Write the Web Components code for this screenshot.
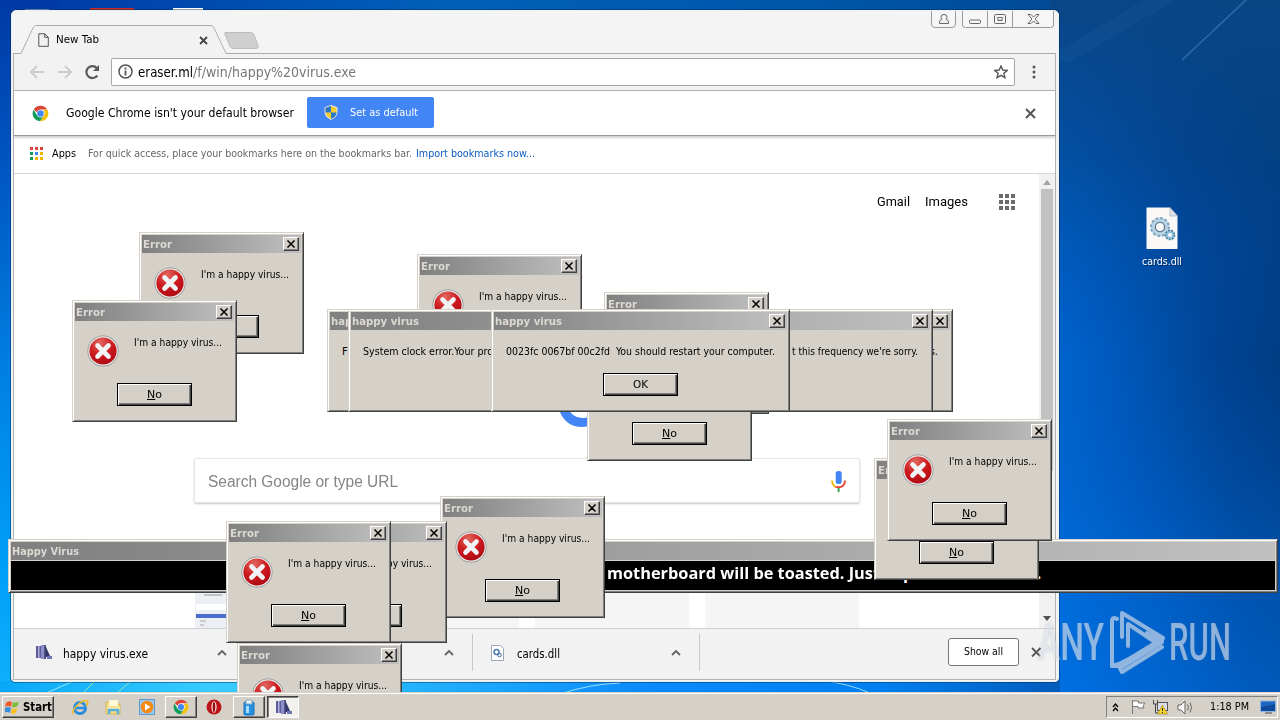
<!DOCTYPE html>
<html lang="en">
<head>
<meta charset="utf-8">
<title>Desktop</title>
<style>
html,body{margin:0;padding:0;width:1280px;height:720px;overflow:hidden}
</style>
</head>
<body>
<desk-top></desk-top>

<script>
const define = (name, html, setup) => customElements.define(name, class extends HTMLElement {
  connectedCallback() {
    if (this.shadowRoot) return;
    this.attachShadow({mode: 'open'}).innerHTML = html;
    if (setup) setup(this);
  }
});

const CHROME = `<circle cx="12" cy="12" r="11" fill="#fff"/><path d="M12 1a11 11 0 0 1 9.6 5.5H12a5.5 5.5 0 0 0-5.2 3.6L2.6 6.3A11 11 0 0 1 12 1z" fill="#db4437"/><path d="M21.6 6.5A11 11 0 0 1 11.5 23l4.8-7.8A5.5 5.5 0 0 0 15.6 7.500z" fill="#f4c20d"/><path d="M2.3 6.600A11 11 0 0 0 11.300 23l4.400-6.900a5.500 5.500 0 0 1-8.600-1.600z" fill="#0f9d58"/><circle cx="12" cy="12" r="4.600" fill="#4285f4"/>`;
const HV = `<rect x="1" y="2" width="5" height="12" fill="#5a5c9c"/><rect x="6" y="1" width="4" height="14" fill="#8c8ec8"/><rect x="3" y="2" width="1.500" height="12" fill="#b0b0d8"/><path d="M10.500 2l5 11h-5z" fill="#34366e"/><rect x="12" y="12" width="5" height="3" fill="#6f74b4"/><rect x="9.500" y="1" width="1.300" height="14" fill="#26285c"/>`;

/* Desktop: wallpaper, icon, windows and the taskbar */
define('desk-top', `
<style>
:host{display:block;position:relative;width:1280px;height:720px;overflow:hidden;font-family:"DejaVu Sans Condensed","DejaVu Sans",sans-serif;font-size:11px;color:#000}
wall-paper,.on{position:absolute}
wall-paper{inset:0}
task-bar{position:absolute;left:0;right:0;bottom:0}
</style>
<wall-paper></wall-paper>
<file-icon class="on" style="left:1121px;top:207px"></file-icon>
<chrome-window class="on" style="left:11px;top:10px"></chrome-window>
<banner-window class="on" style="left:8px;top:539px"></banner-window>
<error-box class="on" style="left:139px;top:232px"></error-box>
<error-box class="on" style="left:72px;top:300px"></error-box>
<error-box class="on" style="left:417px;top:254px"></error-box>
<error-box class="on" style="left:604px;top:292px"></error-box>
<error-box class="on" style="left:587px;top:339px"></error-box>
<message-box class="on" style="left:327px;top:309px;width:626px"><fit-text>F</fit-text><fit-text>s.</fit-text></message-box>
<message-box class="on" style="left:348px;top:309px;width:585px"><fit-text w="130">System clock error.Your pro</fit-text><fit-text w="126">t this frequency we're sorry.</fit-text></message-box>
<message-box class="on" style="left:491px;top:309px;width:299px"><fit-text w="269">0023fc 0067bf 00c2fd&nbsp; You should restart your computer.</fit-text></message-box>
<error-box class="on" style="left:874px;top:458px"></error-box>
<error-box class="on" style="left:887px;top:419px"></error-box>
<error-box class="on" style="left:440px;top:496px"></error-box>
<error-box class="on" style="left:282px;top:521px"></error-box>
<error-box class="on" style="left:237px;top:643px"></error-box>
<error-box class="on" style="left:226px;top:521px"></error-box>
<water-mark class="on" style="left:1030px;top:604px"></water-mark>
<task-bar></task-bar>`);

define('wall-paper', `
<style>
:host{display:block;overflow:hidden}svg{display:block}
</style>
<svg width="1280" height="720">
<defs>
<linearGradient id="l" x2="0" y2="1"><stop offset="0" stop-color="#003aa4"/><stop offset=".25" stop-color="#0058c4"/><stop offset=".55" stop-color="#0084e6"/><stop offset=".8" stop-color="#00a0fa"/><stop offset="1" stop-color="#16b4fc"/></linearGradient>
<linearGradient id="t"><stop offset="0" stop-color="#0038a6"/><stop offset=".35" stop-color="#0060b8"/><stop offset=".6" stop-color="#0058ac"/><stop offset=".83" stop-color="#004a96"/><stop offset="1" stop-color="#0b4684"/></linearGradient>
<linearGradient id="r" x1="0" y1=".75" x2="1" y2=".35"><stop offset="0" stop-color="#006ad8"/><stop offset=".35" stop-color="#0058ba"/><stop offset=".7" stop-color="#004494"/><stop offset="1" stop-color="#003c80"/></linearGradient>
<linearGradient id="rb" x2="0" y2="1"><stop offset="0" stop-color="#0a4686"/><stop offset=".22" stop-color="#054488" stop-opacity=".55"/><stop offset=".5" stop-color="#0050b0" stop-opacity="0"/><stop offset=".8" stop-color="#0070e4" stop-opacity=".35"/><stop offset="1" stop-color="#0074ea" stop-opacity=".5"/></linearGradient>
<linearGradient id="b"><stop offset="0" stop-color="#08a8f8"/><stop offset=".2" stop-color="#38ccff"/><stop offset=".36" stop-color="#26b8fc"/><stop offset=".6" stop-color="#0c8cfa"/><stop offset=".83" stop-color="#0080f0"/><stop offset="1" stop-color="#005cbc"/></linearGradient>
</defs>
<rect width="1280" height="720" fill="url(#t)"/><rect y="0" width="60" height="720" fill="url(#l)"/>
<rect x="1050" width="230" height="720" fill="url(#r)"/><rect x="1050" width="230" height="720" fill="url(#rb)"/>
<path d="M1040 62L1144 0h32L1070 62z" fill="#4a90d0" opacity=".08"/><path d="M1182 60L1246 0" stroke="#5a9ad6" stroke-width="1.500" opacity=".45"/>
<rect y="681" width="1060" height="12" fill="url(#b)"/>
<g stroke="#c8f4ff" fill="none" opacity=".75"><path d="M44 694l32-14M560 694q30-10 60-11"/><path d="M82 694l14-14M116 694l16-14" stroke="#b8f0a8"/><path d="M820 680q30 4 50 13"/></g>
<rect x="25" y="9" width="24" height="3" fill="#9ac0e8"/><rect x="90" y="8" width="44" height="3" fill="#cc2c24"/><rect x="173" y="8" width="30" height="3" fill="#fff"/>
</svg>`);

define('file-icon', `
<style>
:host{display:flex;flex-direction:column;align-items:center;width:82px;gap:4px;color:#fff;text-shadow:1px 1px 1px #002a5c}
</style>
<svg width="32" height="43"><path d="M.5.5H24l7.500 8.500V42H.5z" fill="#fbf9f8"/><path d="M24 .5V9h7.500z" fill="#dfe3ea" stroke="#9aa8b8" stroke-width=".6"/>
<g fill="none" stroke="#7fa3bd"><circle cx="14" cy="20" r="7" stroke-width="5" stroke="#b8d3e4"/><circle cx="14" cy="20" r="9" stroke-width="2" stroke-dasharray="2.500 2.200"/><circle cx="14" cy="20" r="4.600" stroke="#5e7d93" stroke-width="1.300"/><circle cx="24" cy="28" r="3.500" stroke-width="3" stroke="#8cc0dc"/><circle cx="24" cy="28" r="4.600" stroke-width="1.500" stroke-dasharray="1.700 1.500" stroke="#4c7590"/></g></svg>
<fit-text w="40">cards.dll</fit-text>`);

/* Classic window parts */
define('close-button', `
<style>:host{display:flex;align-items:center;justify-content:center;box-sizing:border-box;width:16px;height:14px;background:#d4d0c8;border:1px solid;border-color:#fff #404040 #404040 #fff;box-shadow:inset -1px -1px #808080}</style>
<svg width="10" height="8"><path d="M1.500 .5l7 7M8.500 .5l-7 7" stroke="#000" stroke-width="1.500"/></svg>`);

define('title-bar', `
<style>:host{display:flex;align-items:center;height:18px;box-sizing:border-box;padding:0 2px 0 1px;background:linear-gradient(90deg,#808080,#c0c0c0);color:#dcd9d2;font-weight:bold;font-size:11px;overflow:hidden}
div{flex:1;white-space:nowrap;padding-top:1px}</style>
<div><slot></slot></div><slot name="button"></slot>`);

define('push-button', `
<style>:host{display:flex;align-items:center;justify-content:center;box-sizing:border-box;width:75px;height:23px;background:#d4d0c8;border:1px solid #000;box-shadow:inset 1px 1px #fff,inset -1px -1px #404040,inset -2px -2px #808080}</style>
<slot></slot>`);

const FRAME = `:host{display:flex;flex-direction:column;box-sizing:border-box;background:#d5d0c8;border:1px solid;border-color:#d5d0c8 #404040 #404040 #d5d0c8;box-shadow:inset 1px 1px #fff,inset -1px -1px #808080;padding:2px}`;

define('error-box', `
<style>${FRAME}:host{width:165px;height:122px}
.row{display:flex;padding:14px 0 0 12px;gap:15px}
push-button{margin:16px 0 0 42px}u{text-underline-offset:1px}</style>
<title-bar><fit-text w="29">Error</fit-text><close-button slot="button"></close-button></title-bar>
<div class="row">
<svg width="32" height="32" viewBox="0 0 32 32"><defs><radialGradient id="g" cx=".4" cy=".2" r=".9"><stop offset="0" stop-color="#e2685e"/><stop offset=".5" stop-color="#cc1a1e"/><stop offset="1" stop-color="#a80610"/></radialGradient></defs><circle cx="16" cy="16" r="15.500" fill="#8a8f90"/><circle cx="16" cy="16" r="14.800" fill="#eceae8"/><circle cx="16" cy="16" r="13.600" fill="url(#g)"/><path d="M10.500 10.500l11 11M21.500 10.500l-11 11" stroke="#f1f3f4" stroke-width="4.600" stroke-linecap="round"/></svg>
<fit-text w="88">I'm a happy virus...</fit-text></div>
<push-button><fit-text w="15"><u>N</u>o</fit-text></push-button>`);

define('message-box', `
<style>${FRAME}:host{height:103px}
.msg{display:flex;justify-content:space-between;padding:14px 12px 0}
push-button{align-self:center;margin-top:13px}</style>
<title-bar><fit-text w="67">happy virus</fit-text><close-button slot="button"></close-button></title-bar>
<div class="msg"><slot></slot></div>
<push-button><fit-text w="15">OK</fit-text></push-button>`);

define('banner-window', `
<style>${FRAME}:host{width:1270px;height:54px}
.black{flex:1;background:#000;color:#fff;font:bold 16.5px/22px "Open Sans","Noto Sans",sans-serif;display:flex;align-items:center;padding:0 0 6px 596px;white-space:pre;margin:1px 0 0;min-height:0;box-sizing:border-box}
.p{margin-left:23px}.dot{margin-left:123px}</style>
<title-bar><fit-text w="67">Happy Virus</fit-text></title-bar>
<div class="black"><fit-text w="273">motherboard will be toasted. Just</fit-text><span class="p">p</span><span class="dot">.</span></div>`);

/* Browser window */
define('chrome-window', `
<style>
:host{display:flex;flex-direction:column;box-sizing:border-box;width:1048px;height:672px;background:#f4f4f4;border:1px solid #e9f1f8;border-radius:5px 5px 4px 4px;box-shadow:0 0 0 1px rgba(10,40,80,.45);padding:0 2px 0 1px}
.inner{flex:1;display:flex;flex-direction:column;border:1px solid #b3b3b3;border-top:0;background:#fff;min-height:0;margin-bottom:1px}
</style>
<tab-strip></tab-strip>
<div class="inner"><tool-bar></tool-bar><info-bar></info-bar><bookmarks-bar></bookmarks-bar><new-tab-page></new-tab-page><download-shelf></download-shelf></div>`);

define('tab-strip', `
<style>
:host{display:flex;height:43px;justify-content:space-between;align-items:flex-start;position:relative;margin:0 0 -1px}
.tab{display:flex;align-items:center;height:29px;padding:14px 0 0 25px;position:relative;width:148px}
.bg{position:absolute;left:0;top:14px}
.t{flex:1;margin-left:7px}
.ctl{display:flex}
</style>
<svg class="bg" width="1043" height="30"><path d="M0 28.500h8L20 3Q21 .5 23 .5H198Q200 .5 201 3l12 25.500h829.500" fill="none" stroke="#aaa"/><path d="M9 29L20.500 3.500Q21 1 23 1H198Q200 1 200.500 3.500L212.500 29z" fill="#f2f2f2"/><path d="M212 7.500h26q2 0 3 2l4 11q1 3-2 3h-22q-3 0-4-2l-5-12q-.5-2 0-2z" fill="#cfcfcf" stroke="#bdbdbd"/></svg>
<div class="tab"><svg width="11" height="14" fill="none" stroke="#555"><path d="M.8.8h6l3.500 3.500v9H.8z"/><path d="M6.800.8v3.500h3.500"/></svg><span class="t"><fit-text w="43">New Tab</fit-text></span></div>
<svg style="position:absolute;left:186px;top:25px" width="9" height="9"><path d="M1 1l7 7M8 1L1 8" stroke="#444" stroke-width="1.800"/></svg>
<svg class="ctl" width="125" height="18" fill="none" stroke="#999"><path d="M.5 0v13q0 3.500 3.500 3.500H21q3.500 0 3.500-3.500V0M31.500 0v14q0 2.500 3 2.500h85q3 0 3-2.500V0M56.500 0v16M81.500 0v16" fill="#f6f6f6"/><g stroke="#666"><path d="M8.500 12.500h9v-1.500q0-2-2.500-2.500 1-1 1-2.500 0-2.500-3-2.500t-3 2.500q0 1.500 1 2.500-2.500.5-2.500 2.500z"/><rect x="38.500" y="9" width="11" height="3.500" rx="1"/><rect x="63.500" y="3.500" width="11" height="9" rx="1"/><rect x="67" y="6.500" width="4" height="3"/><path d="M97 3.500h3l2.500 2.500 2.500-2.500h3l-4 4.500 4 4.500h-3l-2.500-2.500-2.500 2.500h-3l4-4.500z"/></g></svg>`);

define('tool-bar', `
<style>
:host{display:flex;align-items:center;height:37px;background:#f2f2f2;border-bottom:1px solid #b0b0b0;padding-left:15px;flex:none}
.nav{display:block}
.omni{display:flex;align-items:center;box-sizing:border-box;width:904px;height:28px;border:1px solid #a6a6a6;border-radius:2px;background:#fff;padding:0 6px;margin-left:10px}
.url{flex:1;margin-left:5px;font-size:14px;display:flex}
.path{color:#777}
.menu{margin-left:17px}
</style>
<svg class="nav" width="72" height="18"><g stroke="#ccc" stroke-width="2" fill="none"><path d="M15 9H2M8 3L2 9l6 6M29 9h13M36 3l6 6-6 6"/></g><path d="M68.300 12.500a6 6 0 1 1-.5-7.500" fill="none" stroke="#5a5a5a" stroke-width="2.200"/><path d="M70 2v6h-6z" fill="#5a5a5a"/></svg>
<div class="omni"><svg width="15" height="15" fill="none" stroke="#555" stroke-width="1.500"><circle cx="7.500" cy="7.500" r="6.500"/><path d="M7.500 6.500v5M7.500 3.500v2" stroke-width="1.800"/></svg>
<span class="url"><fit-text w="55">eraser.ml</fit-text><fit-text class="path" w="163">/f/win/happy%20virus.exe</fit-text></span>
<svg width="14" height="14" viewBox="0 0 14 14" fill="none" stroke="#555" stroke-width="1.400"><path d="M7 1l1.800 4 4.400.4-3.300 2.900 1 4.300L7 10.300l-3.900 2.300 1-4.300L.8 5.400 5.200 5z"/></svg></div>
<svg class="menu" width="4" height="14" fill="#555"><circle cx="2" cy="2" r="1.500"/><circle cx="2" cy="7" r="1.500"/><circle cx="2" cy="12" r="1.500"/></svg>`);

define('info-bar', `
<style>
:host{display:flex;align-items:center;height:44px;background:#fff;border-bottom:1px solid #999;box-shadow:0 2px 2px rgba(0,0,0,.18);padding:0 19px 0 18px;position:relative;flex:none}
.t{margin-left:17px;font-size:13px}
.btn{display:flex;align-items:center;box-sizing:border-box;width:127px;height:31px;margin:-1px 0 0 13px;background:#4285f4;color:#fff;border-radius:2px;padding-left:17px;gap:12px}
.x{margin-left:auto}
</style>
<svg width="17" height="17" viewBox="0 0 24 24">${CHROME}</svg>
<span class="t"><fit-text w="228">Google Chrome isn't your default browser</fit-text></span>
<div class="btn"><svg width="14" height="15" viewBox="0 0 14 15"><path d="M7 .5l6 2v5Q13 12 7 14.500 1 12 1 7.500v-5z" fill="#f5cf32" stroke="#dfe8f2"/><path d="M7 1v6.500H1.500V2.800zM7 7.500h5.500Q12 12 7 14z" fill="#2a78c8"/></svg><fit-text w="68">Set as default</fit-text></div>
<svg class="x" width="11" height="11"><path d="M1 1l9 9M10 1l-9 9" stroke="#555" stroke-width="2"/></svg>`);

define('bookmarks-bar', `
<style>
:host{display:flex;align-items:center;padding:0 0 2px 16px;box-sizing:border-box;height:38px;border-bottom:1px solid #d8d8d8;flex:none}
.a{margin-left:9px}.h{margin-left:12px;color:#666}.i{margin-left:4px;color:#0a5cc0}
</style>
<svg width="13" height="13"><g fill="#db4437"><rect width="3" height="3"/><rect x="5" width="3" height="3"/><rect x="10" width="3" height="3"/></g><g><rect y="5" width="3" height="3" fill="#0f9d58"/><rect x="5" y="5" width="3" height="3" fill="#4285f4"/><rect x="10" y="5" width="3" height="3" fill="#f4b400"/><rect y="10" width="3" height="3" fill="#0f9d58"/><rect x="5" y="10" width="3" height="3" fill="#f4b400"/><rect x="10" y="10" width="3" height="3" fill="#f4b400"/></g></svg>
<fit-text class="a" w="24">Apps</fit-text><fit-text class="h" w="324">For quick access, place your bookmarks here on the bookmarks bar.</fit-text><fit-text class="i" w="119">Import bookmarks now...</fit-text>`);

define('new-tab-page', `
<style>
:host{display:flex;height:454px;flex:none;background:#fff;font-family:"Liberation Sans",sans-serif}
.page{flex:1;display:flex;flex-direction:column;min-width:0}
.links{display:flex;justify-content:flex-end;align-items:center;height:16px;padding:20px 24px 0 0;font:13px Roboto,sans-serif}
.links svg{margin-left:31px}
.logo{height:62px;margin:175px 0 0 530px}
.search{display:flex;align-items:center;box-sizing:border-box;width:666px;height:45px;margin:11px 0 0 180px;border:1px solid #e6e6e6;border-radius:2px;box-shadow:0 1px 2px rgba(0,0,0,.22);padding:3px 13px 0 13px;font-size:16px;color:#858585;justify-content:space-between;flex:none}
.search svg{margin-top:-2px}
.tiles{display:flex;gap:16px;margin:57px 0 0 181px;flex:1}
.tiles div{width:154px;background:#f5f5f5}
.tiles div:first-child{background:#f0f2f6;padding-top:24px;box-sizing:border-box}
.bar{width:16px;background:#f1f1f1;display:flex;flex-direction:column;align-items:center;padding-top:6px;box-sizing:border-box}
.thumb{width:12px;height:282px;background:#c1c1c1;margin:4px 0 145px}
</style>
<div class="page">
<div class="links"><fit-text w="33">Gmail</fit-text><fit-text w="43" style="margin-left:15px">Images</fit-text><svg width="16" height="16" fill="#6c6c6c"><path d="M0 0h4v4H0zM6 0h4v4H6zM12 0h4v4h-4zM0 6h4v4H0zM6 6h4v4H6zM12 6h4v4h-4zM0 12h4v4H0zM6 12h4v4H6zM12 12h4v4h-4z"/></svg></div>
<svg class="logo" width="80" height="62"><path d="M19.500 24Q25 37.500 38 37.500 45 37.500 51 33" fill="none" stroke="#4285f4" stroke-width="9"/></svg>
<div class="search"><fit-text w="190">Search Google or type URL</fit-text><svg width="15" height="21"><rect x="4.700" y="0" width="6" height="13" rx="2.500" fill="#4285f4"/><path d="M1 9.500Q1.500 15 5 16" fill="none" stroke="#f4b400" stroke-width="1.800"/><path d="M4.500 15.800Q13.500 18 14 9.500" fill="none" stroke="#ea4335" stroke-width="1.800"/><path d="M7.600 17v4" stroke="#34a853" stroke-width="2"/></svg></div>
<div class="tiles"><div><svg width="32" height="44" style="display:block"><rect width="32" height="44" fill="#eceff4"/><path d="M9 11h18" stroke="#999"/><rect x="1" y="20" width="30" height="6" fill="#fff"/><rect x="1" y="30" width="30" height="4" fill="#4c6cd0"/><path d="M5 37h6M5 41h4" stroke="#aaa"/></svg></div><div></div><div></div><div></div></div>
</div>
<div class="bar"><svg width="8" height="5"><path d="M0 5l4-5 4 5z" fill="#a3a3a3"/></svg><div class="thumb"></div><svg width="8" height="5"><path d="M0 0h8L4 5z" fill="#505050"/></svg></div>`);

define('download-shelf', `
<style>
:host{display:flex;align-items:center;flex:1;background:#f2f2f2;border-top:1px solid #d0d0d0;font-size:13px;min-height:0;padding-bottom:3px}
.item{display:flex;align-items:center;box-sizing:border-box;flex:none;width:227px;height:37px;padding-left:18px;border-right:1px solid #c8c8c8}
.item.one{width:232px;padding-left:21px}
.item svg:last-child{margin:0 18px 0 auto}
.blank{justify-content:flex-end;padding:0}
.item fit-text{margin-top:3px}
.all{display:flex;box-sizing:border-box;width:71px;height:28px;flex:none;align-items:center;justify-content:center;background:#fff;border:1px solid #777;border-radius:3px;margin:-2px 0 0 auto;font-size:11px}
</style>
<div class="item one"><svg width="17" height="17">${HV}</svg><fit-text w="85" style="margin-left:11px">happy virus.exe</fit-text><svg width="10" height="7"><path d="M1 6l4-4 4 4" fill="none" stroke="#666" stroke-width="1.900"/></svg></div>
<div class="item blank"><svg width="10" height="7"><path d="M1 6l4-4 4 4" fill="none" stroke="#666" stroke-width="1.900"/></svg></div>
<div class="item"><svg width="13" height="16"><path d="M.5.5h9l3 3v12H.5z" fill="#fff" stroke="#9aa8b8"/><circle cx="5.500" cy="7" r="2.500" fill="none" stroke="#4c7cb4" stroke-width="1.500"/><circle cx="8.500" cy="10" r="1.800" fill="none" stroke="#3c6ca4"/></svg><fit-text w="43" style="margin-left:13px">cards.dll</fit-text><svg width="10" height="7"><path d="M1 6l4-4 4 4" fill="none" stroke="#666" stroke-width="1.900"/></svg></div>
<div class="all"><fit-text w="39">Show all</fit-text></div>
<svg width="11" height="11" style="margin:0 13px 0 12px;flex:none"><path d="M1 1l8.500 8.500M9.500 1L1 9.500" stroke="#555" stroke-width="1.800"/></svg>`);

define('water-mark', `
<style>:host{display:block;filter:drop-shadow(0 0 1px rgba(90,110,140,.5))}svg{display:block;opacity:.55}</style>
<svg width="210" height="76" fill="#f2f6fb" font-family="Roboto,sans-serif" font-size="52" font-weight="500"><text x="8" y="56" textLength="66" lengthAdjust="spacingAndGlyphs">ANY</text><text x="139" y="56" textLength="62" lengthAdjust="spacingAndGlyphs">RUN</text>
<g fill="none" stroke="#f2f6fb" stroke-width="4" stroke-linejoin="round" stroke-linecap="round"><path d="M87 15q-5-3-5 3V62l6 0 42-26-13-7"/><path d="M98 42V20l30 20M92 33V9l41 25-3 6"/><path d="M82 62l7-2 43-22-42 26 2 4 40-25"/></g></svg>`);

/* Taskbar */
define('task-bar', `
<style>
:host{display:flex;align-items:center;box-sizing:border-box;height:28px;background:#d5d0c8;border-top:1px solid #d5d0c8;box-shadow:inset 0 1px #fff;padding:2px 2px 1px}
.start,.run,.act{display:flex;align-items:center;justify-content:center;box-sizing:border-box;height:22px;border:1px solid;border-color:#fff #404040 #404040 #fff;box-shadow:inset -1px -1px #808080}
.start{width:52px;font-weight:bold;font-size:12px;gap:2px}
.run{width:32px}
.act{width:32px;background:#f2f1ee;border-color:#404040 #fff #fff #404040;box-shadow:inset 1px 1px #808080;margin-left:2px}
.tray{display:flex;align-items:center;box-sizing:border-box;margin-left:auto;width:172px;height:22px;border:1px solid;border-color:#808080 #fff #fff #808080;padding:0 1px 0 5px}
</style>
<div class="start"><svg width="16" height="16"><path d="M1 4q3-3 6-1L6 8Q3 6 0 8z" fill="#f05a28"/><path d="M8 3q3 2 6-1l-1.500 5Q10 9 7 8z" fill="#7cbb3a"/><path d="M0 9q3-2 6 0l-1 5q-3-2-6 0z" fill="#3a8ee0"/><path d="M7 9q3 2 5.500-.5L11 13.500Q8 16 6 14z" fill="#f8c020"/></svg><fit-text w="29">Start</fit-text></div>
<svg style="margin-left:18px" width="17" height="17"><circle cx="8" cy="9" r="5.500" fill="none" stroke="#2b8cdc" stroke-width="3"/><path d="M3 9h11" stroke="#2b8cdc" stroke-width="2.500"/><path d="M1 15C-1 11 10 0 15 2q2 1-1 5" fill="none" stroke="#f0bd2c" stroke-width="1.700"/></svg>
<svg style="margin-left:16px" width="17" height="16"><path d="M1 3h5l1 2h8v10H1z" fill="#f5dc84" stroke="#d8b450"/><rect x="4" y="1" width="9" height="6" fill="#fff8d4"/><path d="M2 8h13v3H2z" fill="#fae9a8"/><path d="M4 15v-4h9v4" stroke="#58b0e0" stroke-width="2.500" fill="none"/></svg>
<svg style="margin-left:17px" width="17" height="17"><rect x=".5" y=".5" width="15" height="15" fill="#9cc8ee" stroke="#5c9ad0"/><circle cx="8" cy="8" r="6.300" fill="#f38a14"/><path d="M6 4.500v7l5.500-3.500z" fill="#fff"/></svg>
<div class="run" style="margin-left:9px"><svg width="16" height="16" viewBox="0 0 24 24">${CHROME}</svg></div>
<svg style="margin-left:9px" width="16" height="16"><circle cx="8" cy="8" r="7.500" fill="#bc1418"/><ellipse cx="8" cy="8" rx="2.600" ry="5.800" fill="#f5e6e4"/><ellipse cx="8" cy="8" rx="1.300" ry="5" fill="#98080c"/></svg>
<div class="run" style="margin-left:11px"><svg width="12" height="17"><rect x="1" y="3" width="10" height="13" rx="1" fill="#2492e0" stroke="#1c70bc"/><path d="M3 1h6v4H3z" fill="#e8f4fc" stroke="#8ab"/><rect x="3" y="7" width="3" height="7" fill="#a8e0fc"/></svg></div>
<div class="act"><svg width="17" height="17">${HV}</svg></div>
<div class="tray"><svg width="7" height="9" fill="none" stroke="#000" stroke-width="1.300"><path d="M1 4l2.500-3L6 4M1 8l2.500-3L6 8"/></svg>
<svg style="margin-left:11px" width="17" height="16" fill="#fff" stroke="#777"><path d="M2.500 15V1M2.500 2h6v2h6.500l-2 3 1 2H8V7.500H2.500z"/></svg>
<svg style="margin-left:6px" width="17" height="16"><rect x="5.500" y="3.500" width="10" height="8" fill="#dde" stroke="#555"/><path d="M1.500 1v4h4V1M3.500 5v9h4" fill="none" stroke="#444"/><path d="M10.500 6l5 9H5.500z" fill="#f8d42c" stroke="#a08010" stroke-width=".6"/><path d="M10.500 9v3M10.500 13v1" stroke="#222"/></svg>
<svg style="margin-left:8px" width="17" height="15" fill="none" stroke="#666"><path d="M1 5h3l4-4v13L4 10H1z" fill="#f8f8f8"/><path d="M10.500 4.500q2 3 0 6M13 2.500q3 5 0 10"/></svg>
<fit-text style="margin-left:17px" w="39">1:18 PM</fit-text>
<svg style="margin-left:11px" width="16" height="14"><rect x=".5" y="1" width="15" height="10.500" fill="#1f66c4" stroke="#8fb4dc"/><path d="M1 7l14-3v7H1z" fill="#104a9c"/><path d="M5 13h7" stroke="#445"/></svg></div>`);

/* Single-line label set to a given width; defined last, so that fonts are already inherited */
define('fit-text', `
<style>:host{display:inline-block;white-space:nowrap;line-height:16px;flex:none}span{display:inline-block;transform-origin:0 50%}</style><span><slot></slot></span>`, el => {
  const w = +el.getAttribute('w');
  if (!w) return;
  const s = el.shadowRoot.querySelector('span');
  const n = s.getBoundingClientRect().width;
  el.style.width = w + 'px';
  if (n) s.style.transform = `scaleX(${w / n})`;
});
</script>
</body>
</html>
